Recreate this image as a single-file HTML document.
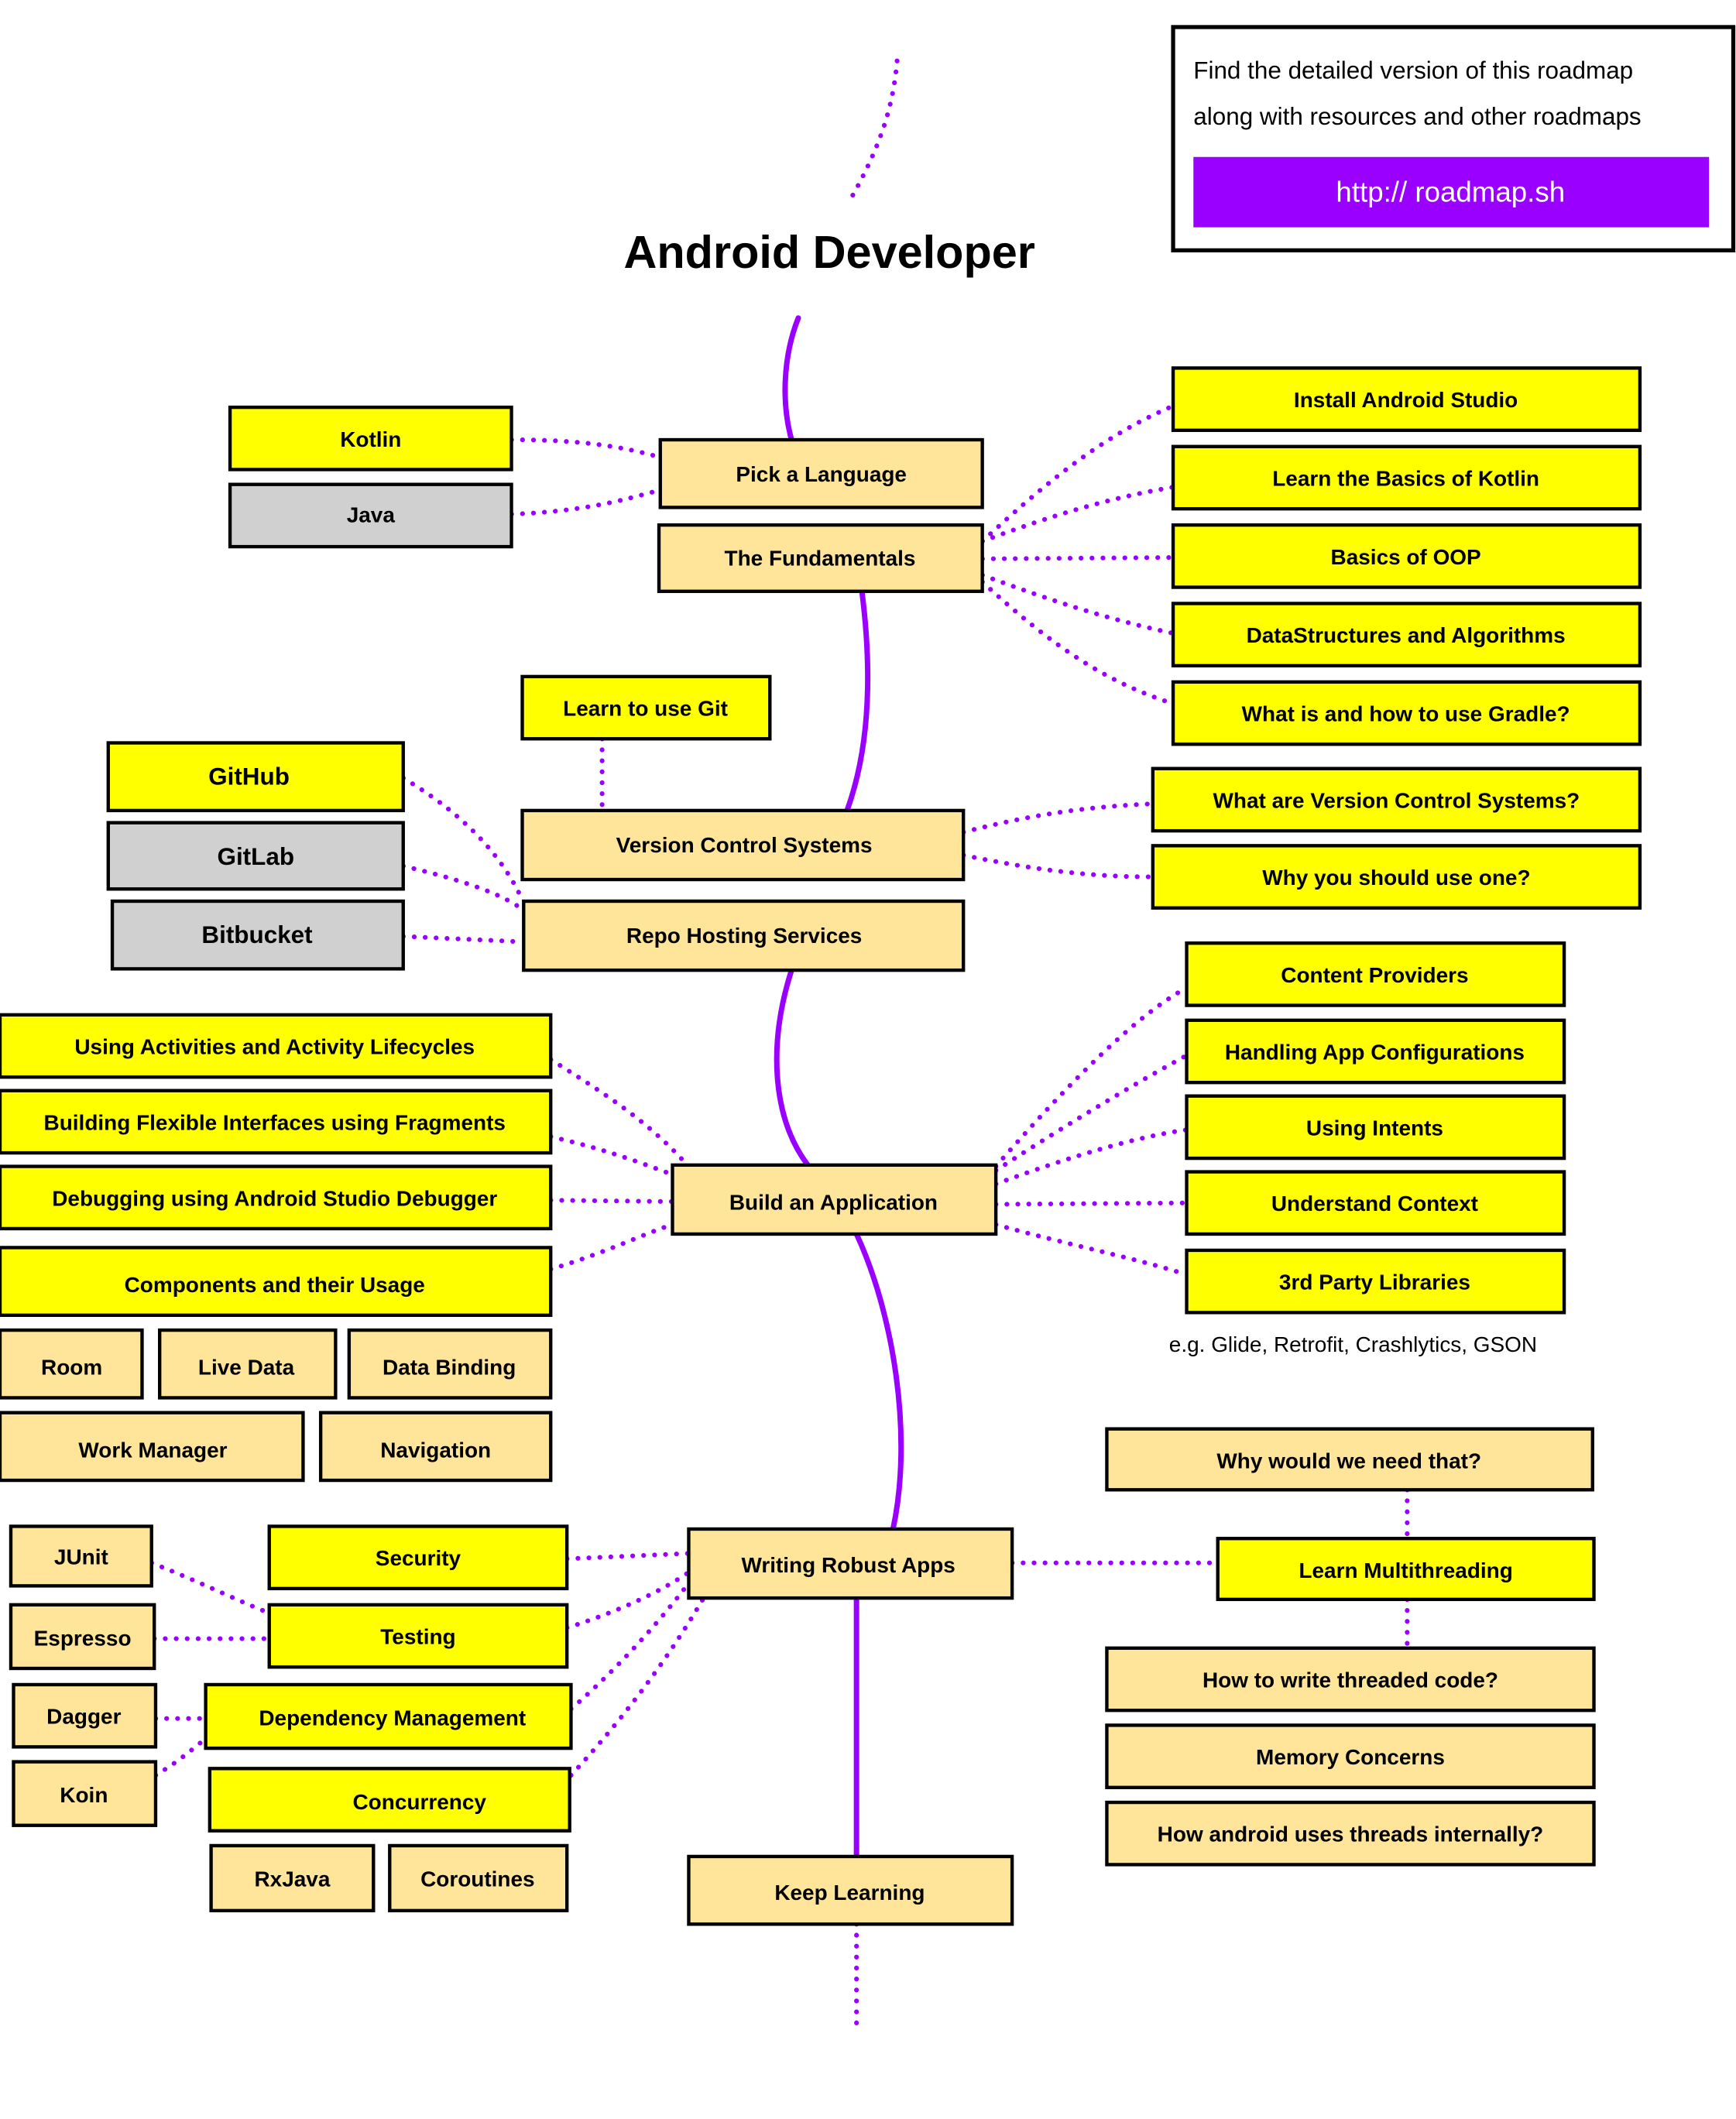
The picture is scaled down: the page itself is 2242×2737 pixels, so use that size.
<!DOCTYPE html>
<html><head><meta charset="utf-8">
<style>
html,body{margin:0;padding:0;background:#fff;}
svg{display:block;}
text{font-family:"Liberation Sans",sans-serif;font-weight:bold;}
</style></head>
<body>
<svg width="2242" height="2737" viewBox="0 0 1283 1566" preserveAspectRatio="none" xmlns="http://www.w3.org/2000/svg">
<g fill="none" stroke="#9900ff" stroke-width="4" stroke-linecap="round">
<path d="M590,235 C578,265 578,300 585,325"/>
<path d="M637,437 C645,500 642,555 626,599"/>
<path d="M585,717 C568,770 570,825 597,861"/>
<path d="M633,912 C660,970 675,1060 660,1130"/>
<path d="M633,1181 L633,1372"/>
</g>
<g fill="none" stroke="#9900ff" stroke-width="3.5" stroke-linecap="round" stroke-dasharray="0.1 8">
<path d="M663,45 C660,80 650,110 627,150"/>
<path d="M633,1422 L633,1500"/>
<path d="M378,325 C430,325 460,330 488,338"/>
<path d="M378,380 C430,378 460,370 488,362"/>
<path d="M726,400 C780,350 820,320 867,300"/>
<path d="M726,400 C780,380 820,368 867,360"/>
<path d="M726,413 L867,412"/>
<path d="M726,425 C780,445 820,458 867,468"/>
<path d="M726,430 C780,480 820,505 867,520"/>
<path d="M445,546 L445,599"/>
<path d="M298,575 C340,600 370,630 386,665"/>
<path d="M298,640 C340,650 370,660 386,672"/>
<path d="M298,692 L386,696"/>
<path d="M712,615 C770,600 810,596 852,594"/>
<path d="M712,632 C770,644 810,648 852,648"/>
<path d="M736,862 C790,800 840,750 877,730"/>
<path d="M736,865 C790,830 840,800 877,780"/>
<path d="M736,875 C790,855 840,840 877,835"/>
<path d="M736,890 L877,889"/>
<path d="M736,905 C790,920 840,930 877,942"/>
<path d="M407,783 C450,810 480,830 507,860"/>
<path d="M407,840 C450,850 475,860 497,868"/>
<path d="M407,887 L497,888"/>
<path d="M407,938 C450,925 475,912 497,905"/>
<path d="M748,1155 L900,1155"/>
<path d="M1040,1101 L1040,1137"/>
<path d="M1040,1182 L1040,1218"/>
<path d="M419,1152 L509,1148"/>
<path d="M419,1203 C460,1190 490,1175 509,1162"/>
<path d="M422,1263 C460,1230 490,1195 509,1170"/>
<path d="M422,1312 C470,1260 500,1215 520,1181"/>
<path d="M112,1155 C150,1170 180,1185 199,1192"/>
<path d="M114,1211 L199,1211"/>
<path d="M115,1270 L152,1270"/>
<path d="M115,1312 C135,1300 145,1290 152,1285"/>
</g>

<text x="613" y="198" font-size="34" text-anchor="middle" fill="#000">Android Developer</text>

<rect x="867" y="20" width="414" height="165" fill="#fff" stroke="#000" stroke-width="3"/>
<text x="882" y="58" font-size="18" font-weight="normal" style="font-weight:normal" fill="#000">Find the detailed version of this roadmap</text>
<text x="882" y="92" font-size="18" style="font-weight:normal" fill="#000">along with resources and other roadmaps</text>
<rect x="882" y="116" width="381" height="52" fill="#9900ff"/>
<text x="1072" y="149" font-size="21" text-anchor="middle" fill="#fff" style="font-weight:normal">http:// roadmap.sh</text>

<g stroke="#000" stroke-width="2.5" font-size="16">
<rect x="170" y="301" width="208" height="46" fill="#ffff00"/>
<rect x="170" y="358" width="208" height="46" fill="#d0d0d0"/>
<rect x="488" y="325" width="238" height="50" fill="#ffe599"/>
<rect x="487" y="388" width="239" height="49" fill="#ffe599"/>
<rect x="867" y="272" width="345" height="46" fill="#ffff00"/>
<rect x="867" y="330" width="345" height="46" fill="#ffff00"/>
<rect x="867" y="388" width="345" height="46" fill="#ffff00"/>
<rect x="867" y="446" width="345" height="46" fill="#ffff00"/>
<rect x="867" y="504" width="345" height="46" fill="#ffff00"/>
<rect x="386" y="500" width="183" height="46" fill="#ffff00"/>
<rect x="80" y="549" width="218" height="50" fill="#ffff00"/>
<rect x="80" y="608" width="218" height="49" fill="#d0d0d0"/>
<rect x="83" y="666" width="215" height="50" fill="#d0d0d0"/>
<rect x="386" y="599" width="326" height="51" fill="#ffe599"/>
<rect x="387" y="666" width="325" height="51" fill="#ffe599"/>
<rect x="852" y="568" width="360" height="46" fill="#ffff00"/>
<rect x="852" y="625" width="360" height="46" fill="#ffff00"/>
<rect x="877" y="697" width="279" height="46" fill="#ffff00"/>
<rect x="877" y="754" width="279" height="46" fill="#ffff00"/>
<rect x="877" y="810" width="279" height="46" fill="#ffff00"/>
<rect x="877" y="866" width="279" height="46" fill="#ffff00"/>
<rect x="877" y="924" width="279" height="46" fill="#ffff00"/>
<rect x="0" y="750" width="407" height="46" fill="#ffff00"/>
<rect x="0" y="806" width="407" height="46" fill="#ffff00"/>
<rect x="0" y="862" width="407" height="46" fill="#ffff00"/>
<rect x="0" y="922" width="407" height="50" fill="#ffff00"/>
<rect x="497" y="861" width="239" height="51" fill="#ffe599"/>
<rect x="0" y="983" width="105" height="50" fill="#ffe599"/>
<rect x="118" y="983" width="130" height="50" fill="#ffe599"/>
<rect x="258" y="983" width="149" height="50" fill="#ffe599"/>
<rect x="0" y="1044" width="224" height="50" fill="#ffe599"/>
<rect x="237" y="1044" width="170" height="50" fill="#ffe599"/>
<rect x="818" y="1056" width="359" height="45" fill="#ffe599"/>
<rect x="900" y="1137" width="278" height="45" fill="#ffff00"/>
<rect x="818" y="1218" width="360" height="46" fill="#ffe599"/>
<rect x="818" y="1275" width="360" height="46" fill="#ffe599"/>
<rect x="818" y="1332" width="360" height="46" fill="#ffe599"/>
<rect x="509" y="1130" width="239" height="51" fill="#ffe599"/>
<rect x="8" y="1128" width="104" height="44" fill="#ffe599"/>
<rect x="8" y="1186" width="106" height="47" fill="#ffe599"/>
<rect x="10" y="1245" width="105" height="46" fill="#ffe599"/>
<rect x="10" y="1302" width="105" height="47" fill="#ffe599"/>
<rect x="199" y="1128" width="220" height="46" fill="#ffff00"/>
<rect x="199" y="1186" width="220" height="46" fill="#ffff00"/>
<rect x="152" y="1245" width="270" height="47" fill="#ffff00"/>
<rect x="155" y="1307" width="266" height="46" fill="#ffff00"/>
<rect x="156" y="1364" width="120" height="48" fill="#ffe599"/>
<rect x="288" y="1364" width="131" height="48" fill="#ffe599"/>
<rect x="509" y="1372" width="239" height="50" fill="#ffe599"/>
</g>

<g font-size="16" text-anchor="middle" fill="#000">
<text x="274" y="330">Kotlin</text>
<text x="274" y="386">Java</text>
<text x="607" y="356">Pick a Language</text>
<text x="606" y="418">The Fundamentals</text>
<text x="1039" y="301">Install Android Studio</text>
<text x="1039" y="359">Learn the Basics of Kotlin</text>
<text x="1039" y="417">Basics of OOP</text>
<text x="1039" y="475">DataStructures and Algorithms</text>
<text x="1039" y="533">What is and how to use Gradle?</text>
<text x="477" y="529">Learn to use Git</text>
<text x="184" y="580" font-size="18">GitHub</text>
<text x="189" y="639" font-size="18">GitLab</text>
<text x="190" y="697" font-size="18">Bitbucket</text>
<text x="550" y="630">Version Control Systems</text>
<text x="550" y="697">Repo Hosting Services</text>
<text x="1032" y="597">What are Version Control Systems?</text>
<text x="1032" y="654">Why you should use one?</text>
<text x="1016" y="726">Content Providers</text>
<text x="1016" y="783">Handling App Configurations</text>
<text x="1016" y="839">Using Intents</text>
<text x="1016" y="895">Understand Context</text>
<text x="1016" y="953">3rd Party Libraries</text>
<text x="1000" y="999" style="font-weight:normal">e.g. Glide, Retrofit, Crashlytics, GSON</text>
<text x="203" y="779">Using Activities and Activity Lifecycles</text>
<text x="203" y="835">Building Flexible Interfaces using Fragments</text>
<text x="203" y="891">Debugging using Android Studio Debugger</text>
<text x="203" y="955">Components and their Usage</text>
<text x="616" y="894">Build an Application</text>
<text x="53" y="1016">Room</text>
<text x="182" y="1016">Live Data</text>
<text x="332" y="1016">Data Binding</text>
<text x="113" y="1077">Work Manager</text>
<text x="322" y="1077">Navigation</text>
<text x="997" y="1085">Why would we need that?</text>
<text x="1039" y="1166">Learn Multithreading</text>
<text x="998" y="1247">How to write threaded code?</text>
<text x="998" y="1304">Memory Concerns</text>
<text x="998" y="1361">How android uses threads internally?</text>
<text x="627" y="1162">Writing Robust Apps</text>
<text x="60" y="1156">JUnit</text>
<text x="61" y="1216">Espresso</text>
<text x="62" y="1274">Dagger</text>
<text x="62" y="1332">Koin</text>
<text x="309" y="1157">Security</text>
<text x="309" y="1215">Testing</text>
<text x="290" y="1275">Dependency Management</text>
<text x="310" y="1337">Concurrency</text>
<text x="216" y="1394">RxJava</text>
<text x="353" y="1394">Coroutines</text>
<text x="628" y="1404">Keep Learning</text>
</g>
</svg>
</body></html>
